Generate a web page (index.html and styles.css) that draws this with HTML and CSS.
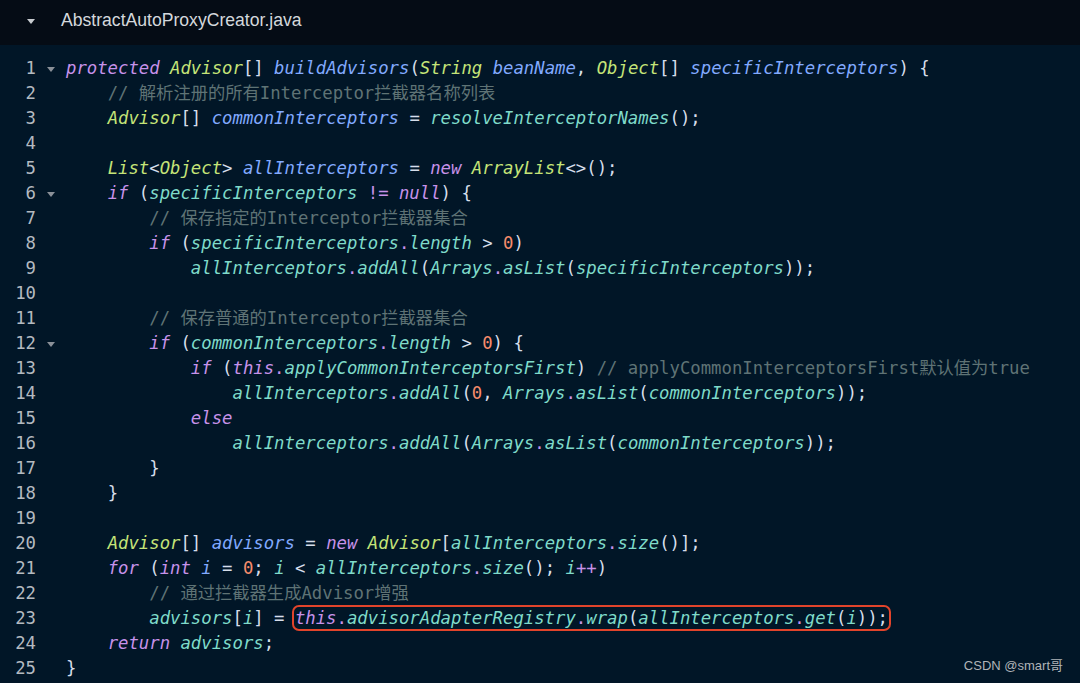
FILE: index.html
```html
<!DOCTYPE html>
<html lang="zh-CN">
<head>
    <meta charset="UTF-8">
    <meta name="viewport" content="width=device-width, initial-scale=1.0">
    <title>AbstractAutoProxyCreator.java</title>
    <link rel="stylesheet" href="styles.css">
</head>
<body>
    <div class="editor">
        <div class="file-bar">
            <span class="caret"></span>
            <span class="file-name">AbstractAutoProxyCreator.java</span>
        </div>
        <div class="code">
            <div class="line"><span class="num">1</span><span class="fold open"></span><span class="src"><span class="k">protected</span> <span class="t">Advisor</span><span class="p">[]</span> <span class="f">buildAdvisors</span><span class="p">(</span><span class="t">String</span> <span class="f">beanName</span><span class="p">,</span> <span class="t">Object</span><span class="p">[]</span> <span class="f">specificInterceptors</span><span class="p">) {</span></span></div>
            <div class="line"><span class="num">2</span><span class="fold"></span><span class="src">    <span class="c">// 解析注册的所有Interceptor拦截器名称列表</span></span></div>
            <div class="line"><span class="num">3</span><span class="fold"></span><span class="src">    <span class="t">Advisor</span><span class="p">[]</span> <span class="f">commonInterceptors</span> <span class="p">=</span> <span class="v">resolveInterceptorNames</span><span class="p">();</span></span></div>
            <div class="line"><span class="num">4</span><span class="fold"></span><span class="src"></span></div>
            <div class="line"><span class="num">5</span><span class="fold"></span><span class="src">    <span class="t">List</span><span class="p">&lt;</span><span class="t">Object</span><span class="p">&gt;</span> <span class="f">allInterceptors</span> <span class="p">=</span> <span class="k">new</span> <span class="t">ArrayList</span><span class="p">&lt;&gt;();</span></span></div>
            <div class="line"><span class="num">6</span><span class="fold open"></span><span class="src">    <span class="k">if</span> <span class="p">(</span><span class="v">specificInterceptors</span> <span class="o">!=</span> <span class="k">null</span><span class="p">) {</span></span></div>
            <div class="line"><span class="num">7</span><span class="fold"></span><span class="src">        <span class="c">// 保存指定的Interceptor拦截器集合</span></span></div>
            <div class="line"><span class="num">8</span><span class="fold"></span><span class="src">        <span class="k">if</span> <span class="p">(</span><span class="v">specificInterceptors</span><span class="o">.</span><span class="v">length</span> <span class="p">&gt;</span> <span class="n">0</span><span class="p">)</span></span></div>
            <div class="line"><span class="num">9</span><span class="fold"></span><span class="src">            <span class="v">allInterceptors</span><span class="o">.</span><span class="v">addAll</span><span class="p">(</span><span class="v">Arrays</span><span class="o">.</span><span class="v">asList</span><span class="p">(</span><span class="v">specificInterceptors</span><span class="p">));</span></span></div>
            <div class="line"><span class="num">10</span><span class="fold"></span><span class="src"></span></div>
            <div class="line"><span class="num">11</span><span class="fold"></span><span class="src">        <span class="c">// 保存普通的Interceptor拦截器集合</span></span></div>
            <div class="line"><span class="num">12</span><span class="fold open"></span><span class="src">        <span class="k">if</span> <span class="p">(</span><span class="v">commonInterceptors</span><span class="o">.</span><span class="v">length</span> <span class="p">&gt;</span> <span class="n">0</span><span class="p">) {</span></span></div>
            <div class="line"><span class="num">13</span><span class="fold"></span><span class="src">            <span class="k">if</span> <span class="p">(</span><span class="k">this</span><span class="o">.</span><span class="v">applyCommonInterceptorsFirst</span><span class="p">)</span> <span class="c">// applyCommonInterceptorsFirst默认值为true</span></span></div>
            <div class="line"><span class="num">14</span><span class="fold"></span><span class="src">                <span class="v">allInterceptors</span><span class="o">.</span><span class="v">addAll</span><span class="p">(</span><span class="n">0</span><span class="p">,</span> <span class="v">Arrays</span><span class="o">.</span><span class="v">asList</span><span class="p">(</span><span class="v">commonInterceptors</span><span class="p">));</span></span></div>
            <div class="line"><span class="num">15</span><span class="fold"></span><span class="src">            <span class="k">else</span></span></div>
            <div class="line"><span class="num">16</span><span class="fold"></span><span class="src">                <span class="v">allInterceptors</span><span class="o">.</span><span class="v">addAll</span><span class="p">(</span><span class="v">Arrays</span><span class="o">.</span><span class="v">asList</span><span class="p">(</span><span class="v">commonInterceptors</span><span class="p">));</span></span></div>
            <div class="line"><span class="num">17</span><span class="fold"></span><span class="src">        <span class="p">}</span></span></div>
            <div class="line"><span class="num">18</span><span class="fold"></span><span class="src">    <span class="p">}</span></span></div>
            <div class="line"><span class="num">19</span><span class="fold"></span><span class="src"></span></div>
            <div class="line"><span class="num">20</span><span class="fold"></span><span class="src">    <span class="t">Advisor</span><span class="p">[]</span> <span class="f">advisors</span> <span class="p">=</span> <span class="k">new</span> <span class="t">Advisor</span><span class="p">[</span><span class="v">allInterceptors</span><span class="o">.</span><span class="v">size</span><span class="p">()];</span></span></div>
            <div class="line"><span class="num">21</span><span class="fold"></span><span class="src">    <span class="k">for</span> <span class="p">(</span><span class="k">int</span> <span class="f">i</span> <span class="p">=</span> <span class="n">0</span><span class="p">;</span> <span class="v">i</span> <span class="p">&lt;</span> <span class="v">allInterceptors</span><span class="o">.</span><span class="v">size</span><span class="p">();</span> <span class="v">i</span><span class="o">++</span><span class="p">)</span></span></div>
            <div class="line"><span class="num">22</span><span class="fold"></span><span class="src">        <span class="c">// 通过拦截器生成Advisor增强</span></span></div>
            <div class="line"><span class="num">23</span><span class="fold"></span><span class="src">        <span class="v">advisors</span><span class="p">[</span><span class="v">i</span><span class="p">]</span> <span class="p">=</span> <span class="mark"><span class="k">this</span><span class="o">.</span><span class="v">advisorAdapterRegistry</span><span class="o">.</span><span class="v">wrap</span><span class="p">(</span><span class="v">allInterceptors</span><span class="o">.</span><span class="v">get</span><span class="p">(</span><span class="v">i</span><span class="p">));</span></span></span></div>
            <div class="line"><span class="num">24</span><span class="fold"></span><span class="src">    <span class="k">return</span> <span class="v">advisors</span><span class="p">;</span></span></div>
            <div class="line"><span class="num">25</span><span class="fold"></span><span class="src"><span class="p">}</span></span></div>
        </div>
        <div class="watermark">CSDN @smart哥</div>
    </div>
</body>
</html>
```

FILE: styles.css
```css
body {
    margin: 0;
    background-color: #011627;
}

.editor {
    position: relative;
    width: 1080px;
    height: 683px;
    overflow: hidden;
    background-color: #011627;
}

.file-bar {
    display: flex;
    align-items: center;
    height: 45px;
    padding-left: 27px;
    background-color: #050c15;
    box-sizing: border-box;
}

.caret {
    width: 0;
    height: 0;
    border-left: 4.5px solid transparent;
    border-right: 4.5px solid transparent;
    border-top: 5px solid #c8ccd0;
    margin-right: 26px;
    margin-top: -2px;
}

.file-name {
    font-family: "Liberation Sans", Arial, sans-serif;
    font-size: 17.6px;
    color: #d4d8dc;
    margin-top: -4px;
}

.code {
    padding-top: 11px;
    font-family: "DejaVu Sans Mono", "Noto Sans CJK SC", monospace;
    font-size: 17.3px;
    line-height: 25px;
}

.line {
    display: flex;
    height: 25px;
}

.num {
    width: 36px;
    text-align: right;
    color: #b4bac0;
    flex-shrink: 0;
}

.fold {
    position: relative;
    width: 30px;
    flex-shrink: 0;
}

.fold.open::after {
    content: '';
    position: absolute;
    left: 11px;
    top: 11px;
    border-left: 4.5px solid transparent;
    border-right: 4.5px solid transparent;
    border-top: 5px solid #8a9098;
}

.src {
    white-space: pre;
    color: #d6deeb;
}

.k { color: #c792ea; font-style: italic; }
.t { color: #c5e478; font-style: italic; }
.f { color: #82aaff; font-style: italic; }
.v { color: #7fdbca; font-style: italic; }
.o { color: #c792ea; }
.p { color: #d6deeb; }
.n { color: #f78c6c; }
.c { color: #5f7375; }

.mark {
    border-radius: 4px;
    outline: 2.5px solid #e2442b;
    outline-offset: 1px;
}

.watermark {
    position: absolute;
    right: 17px;
    bottom: 9px;
    font-family: "Liberation Sans", Arial, sans-serif;
    font-size: 13px;
    color: #b0b4b8;
}
```
